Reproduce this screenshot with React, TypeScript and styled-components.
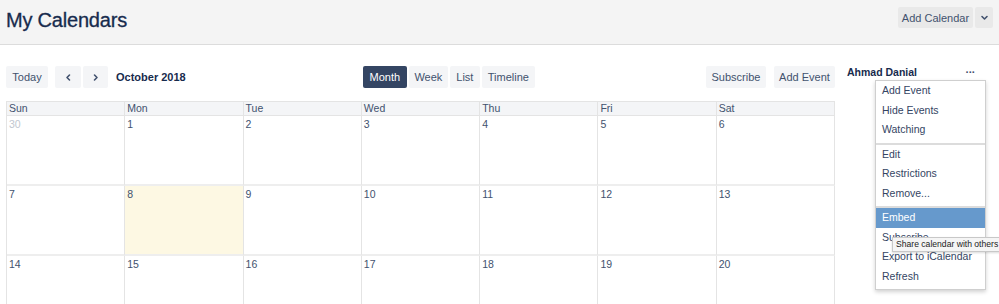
import styled, { createGlobalStyle } from "styled-components";

const GlobalStyle = createGlobalStyle`
  html, body {
    margin: 0;
    padding: 0;
    background: #ffffff;
    font-family: "Liberation Sans", Arial, sans-serif;
    color: #172b4d;
  }
  * { box-sizing: border-box; }
`;

const Page = styled.div`
  width: 999px;
  height: 304px;
  overflow: hidden;
`;

const Header = styled.header`
  height: 45px;
  background: #f4f4f4;
  border-bottom: 1px solid #dcdcdc;
  display: flex;
  align-items: flex-start;
  justify-content: space-between;
  padding: 0 6px 0 6px;
`;

const Title = styled.h1`
  margin: 9px 0 0 0;
  font-size: 20px;
  font-weight: 400;
  color: #172b4d;
  letter-spacing: -0.2px;
  -webkit-text-stroke: 0.3px #172b4d;
`;

const HeaderActions = styled.div`
  display: flex;
  gap: 2px;
  margin-top: 7px;
`;

const Button = styled.button<{ $active?: boolean; $w?: number }>`
  height: 22px;
  padding: 0 8px;
  border: none;
  border-radius: 2px;
  font-family: inherit;
  font-size: 11px;
  background: ${(p) => (p.$active ? "#344563" : "#f4f5f7")};
  color: ${(p) => (p.$active ? "#ffffff" : "#42526e")};
  display: inline-flex;
  align-items: center;
  justify-content: center;
  white-space: nowrap;
  ${(p) => (p.$w ? `width: ${p.$w}px; padding: 0;` : "")}
`;

const HeaderButton = styled(Button)`
  background: #e9e9e9;
  height: 21px;
`;

const Body = styled.div`
  display: flex;
  padding: 21px 0 0 6px;
`;

const CalendarCol = styled.div`
  width: 829px;
`;

const Toolbar = styled.div`
  display: flex;
  justify-content: space-between;
  align-items: center;
  height: 22px;
  margin-bottom: 13px;
`;

const Group = styled.div<{ $gap: number }>`
  display: flex;
  align-items: center;
  gap: ${(p) => p.$gap}px;
`;

const Spread = styled(Group)`
  margin-left: 7px;
`;

const MonthTitle = styled.h2`
  margin: 0 0 0 8px;
  font-size: 11px;
  font-weight: 700;
  color: #172b4d;
`;

const ViewSwitch = styled(Group)`
  margin-left: 6px;
`;

const Grid = styled.div`
  display: grid;
  grid-template-columns: repeat(7, 1fr);
  border-left: 1px solid #e4e4e4;
  border-top: 1px solid #e4e4e4;
`;

const DayHead = styled.div`
  height: 14px;
  background: #f4f5f7;
  border-right: 1px solid #e4e4e4;
  border-bottom: 1px solid #e4e4e4;
  font-size: 10.5px;
  line-height: 13px;
  padding-left: 2px;
  color: #42526e;
`;

const Cell = styled.div<{ $today?: boolean; $muted?: boolean }>`
  height: 70px;
  border-right: 1px solid #e4e4e4;
  border-bottom: 2px solid #eeeeee;
  background: ${(p) => (p.$today ? "#fdf8e3" : "#ffffff")};
  font-size: 10.5px;
  line-height: 14px;
  padding: 1px 0 0 2px;
  color: ${(p) => (p.$muted ? "#c1c7d0" : "#42526e")};
`;

const Sidebar = styled.aside`
  position: relative;
  margin-left: 12px;
  width: 140px;
`;

const OwnerRow = styled.div`
  display: flex;
  justify-content: space-between;
  align-items: center;
  height: 12px;
`;

const OwnerName = styled.span`
  font-size: 10.5px;
  font-weight: 700;
  color: #172b4d;
`;

const More = styled.span`
  font-size: 11px;
  font-weight: 700;
  color: #42526e;
  letter-spacing: -0.5px;
  margin-right: 12px;
`;

const Menu = styled.div`
  position: absolute;
  top: 14px;
  left: 28px;
  width: 111px;
  background: #ffffff;
  border: 1px solid #cfcfcf;
  box-shadow: 0 2px 4px rgba(0, 0, 0, 0.18);
`;

const MenuGroup = styled.div`
  padding-bottom: 3px;
  & + & {
    border-top: 2px solid #dcdcdc;
  }
`;

const MenuItem = styled.div<{ $selected?: boolean }>`
  height: 19.5px;
  line-height: 19px;
  padding-left: 6px;
  font-size: 10.5px;
  color: ${(p) => (p.$selected ? "#ffffff" : "#344563")};
  background: ${(p) => (p.$selected ? "#6699cc" : "transparent")};
`;

const Tooltip = styled.div`
  position: absolute;
  top: 171px;
  left: 45px;
  height: 15px;
  padding: 0 3px;
  white-space: nowrap;
  background: #f5f5f5;
  border: 1px solid #c8c8c8;
  font-size: 8.6px;
  line-height: 13px;
  color: #222222;
  box-shadow: 0 1px 2px rgba(0, 0, 0, 0.15);
`;

const Chevron = ({ dir }: { dir: "left" | "right" | "down" }) => {
  const d =
    dir === "left" ? "M5.5 2 L3 4.5 L5.5 7" : dir === "right" ? "M3.5 2 L6 4.5 L3.5 7" : "M2 3.5 L4.5 6 L7 3.5";
  return (
    <svg width="9" height="9" viewBox="0 0 9 9">
      <path d={d} fill="none" stroke="#42526e" strokeWidth="1.6" strokeLinecap="round" strokeLinejoin="round" />
    </svg>
  );
};

const days = ["Sun", "Mon", "Tue", "Wed", "Thu", "Fri", "Sat"];
const dates = [30, 1, 2, 3, 4, 5, 6, 7, 8, 9, 10, 11, 12, 13, 14, 15, 16, 17, 18, 19, 20];

const menuGroups = [
  ["Add Event", "Hide Events", "Watching"],
  ["Edit", "Restrictions", "Remove..."],
  ["Embed", "Subscribe", "Export to iCalendar", "Refresh"],
];

export default function App() {
  return (
    <Page>
      <GlobalStyle />
      <Header>
        <Title>My Calendars</Title>
        <HeaderActions>
          <HeaderButton $w={75}>Add Calendar</HeaderButton>
          <HeaderButton $w={18}>
            <Chevron dir="down" />
          </HeaderButton>
        </HeaderActions>
      </Header>
      <Body>
        <CalendarCol>
          <Toolbar>
            <Group $gap={0}>
              <Button $w={42}>Today</Button>
              <Spread $gap={2}>
                <Button $w={26}>
                  <Chevron dir="left" />
                </Button>
                <Button $w={25}>
                  <Chevron dir="right" />
                </Button>
              </Spread>
              <MonthTitle>October 2018</MonthTitle>
            </Group>
            <ViewSwitch $gap={2}>
              <Button $active $w={44}>Month</Button>
              <Button $w={39}>Week</Button>
              <Button $w={30}>List</Button>
              <Button $w={53}>Timeline</Button>
            </ViewSwitch>
            <Group $gap={8}>
              <Button $w={60}>Subscribe</Button>
              <Button $w={61}>Add Event</Button>
            </Group>
          </Toolbar>
          <Grid>
            {days.map((d) => (
              <DayHead key={d}>{d}</DayHead>
            ))}
            {dates.map((n, i) => (
              <Cell key={i} $muted={i === 0} $today={n === 8}>
                {n}
              </Cell>
            ))}
          </Grid>
        </CalendarCol>
        <Sidebar>
          <OwnerRow>
            <OwnerName>Ahmad Danial</OwnerName>
            <More>···</More>
          </OwnerRow>
          <Menu>
            {menuGroups.map((g, gi) => (
              <MenuGroup key={gi}>
                {g.map((item) => (
                  <MenuItem key={item} $selected={item === "Embed"}>
                    {item}
                  </MenuItem>
                ))}
              </MenuGroup>
            ))}
          </Menu>
          <Tooltip>Share calendar with others</Tooltip>
        </Sidebar>
      </Body>
    </Page>
  );
}
